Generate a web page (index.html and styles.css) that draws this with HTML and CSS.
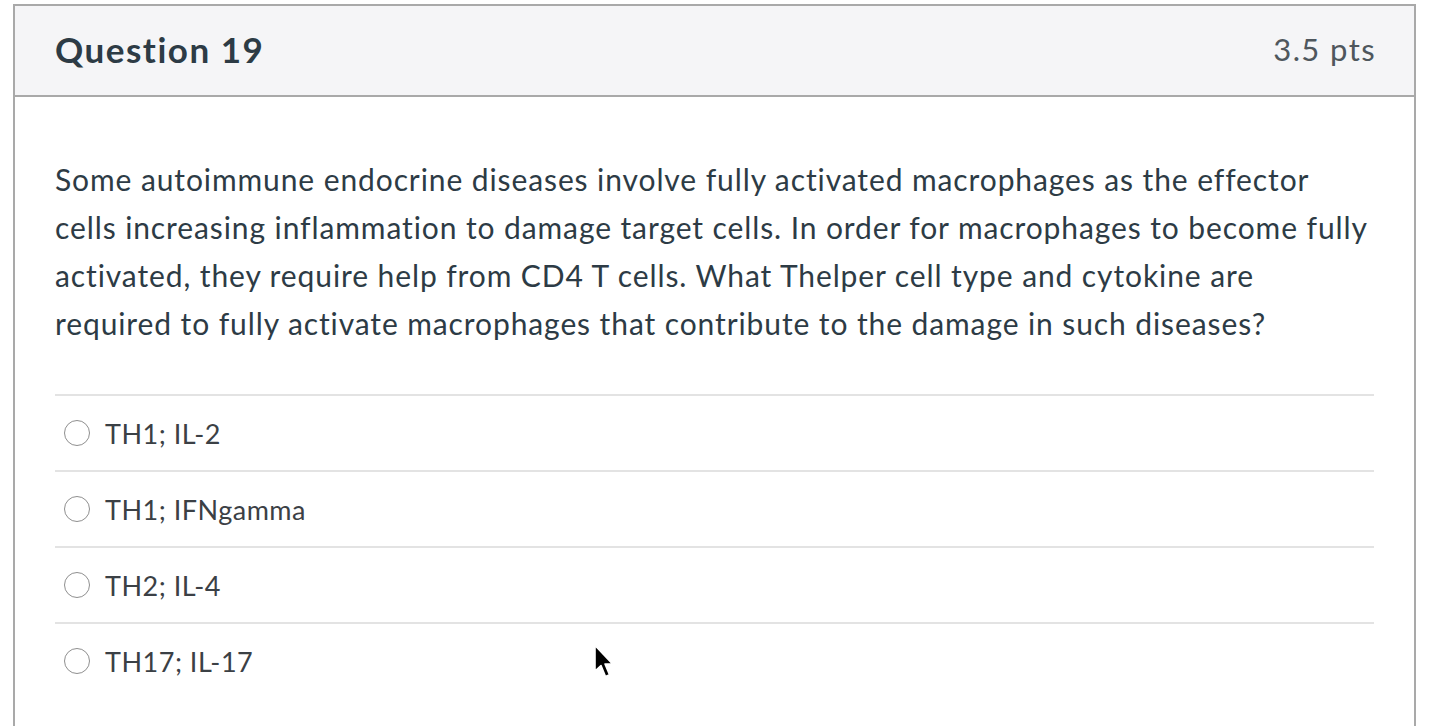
FILE: index.html
```html
<!DOCTYPE html>
<html>
<head>
<meta charset="utf-8">
<link rel="stylesheet" href="styles.css">
</head>
<body>
<div class="card">
  <div class="card-header">
    <span class="q-title">Question 19</span>
    <span class="q-points">3.5 pts</span>
  </div>
  <div class="card-body">
    <p class="q-text">Some autoimmune endocrine diseases involve fully activated macrophages as the effector cells increasing inflammation to damage target cells. In order for macrophages to become fully activated, they require help from CD4 T cells. What Thelper cell type and cytokine are required to fully activate macrophages that contribute to the damage in such diseases?</p>
    <div class="answers">
      <label class="answer"><span class="radio"></span><span class="answer-text">TH1; IL-2</span></label>
      <label class="answer"><span class="radio"></span><span class="answer-text">TH1; IFNgamma</span></label>
      <label class="answer"><span class="radio"></span><span class="answer-text">TH2; IL-4</span></label>
      <label class="answer"><span class="radio"></span><span class="answer-text">TH17; IL-17</span>
        <svg class="cursor" width="24" height="36" viewBox="0 0 24 36"><path d="M2 1.5 L2 27 L8 21.5 L12.5 32.5 L16.5 30.8 L12 20 L19.5 20 Z" fill="#000" stroke="#fff" stroke-width="1.6" stroke-linejoin="round"/></svg>
      </label>
    </div>
  </div>
</div>
</body>
</html>
```
FILE: styles.css
```css
html, body {
  margin: 0;
  padding: 0;
  background: #ffffff;
}
body {
  font-family: Lato, "Open Sans", sans-serif;
  color: #2d3b45;
  height: 726px;
  overflow: hidden;
}
.card {
  margin: 4px 0 0 13px;
  width: 1399px;
  border: 2px solid #a9a9a9;
  border-bottom: none;
  height: 720px;
}
.card-header {
  background: #f5f5f7;
  border-bottom: 2px solid #a9a9a9;
  height: 89px;
  display: flex;
  align-items: center;
  justify-content: space-between;
  padding: 0 40px;
}
.q-title {
  font-size: 35px;
  font-weight: 700;
  letter-spacing: 1.5px;
  color: #2d3b45;
  margin-top: -4px;
}
.q-points {
  font-size: 31px;
  letter-spacing: 1.4px;
  color: #4f575d;
  margin-top: -4px;
  margin-right: -2px;
}
.card-body {
  padding: 58px 40px 0 40px;
}
.q-text {
  margin: 0;
  font-size: 30px;
  letter-spacing: 0.9px;
  line-height: 48px;
  color: #2d3b45;
}
.answers {
  margin-top: 47px;
}
.answer {
  display: flex;
  align-items: center;
  height: 74px;
  border-top: 2px solid #e3e3e3;
  padding-left: 9px;
  position: relative;
}
.radio {
  border: 1.5px solid #8f8f8f;
  border-radius: 50%;
  box-sizing: border-box;
  flex: none;
  width: 26px;
  height: 26px;
}
.answer-text {
  margin-left: 15px;
  font-size: 27px;
  letter-spacing: 0.5px;
  color: #3b4045;
}
.cursor {
  position: absolute;
  left: 538px;
  top: 20px;
}
```
